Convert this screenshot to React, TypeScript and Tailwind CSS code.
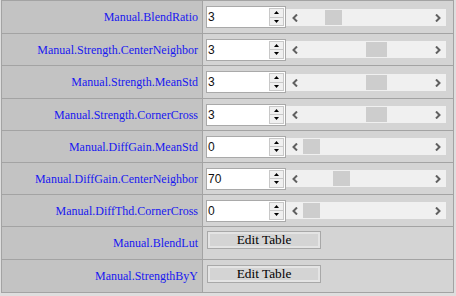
import React from "react";

type Row = {
  label: string;
  h: string;
  kind: "num" | "btn";
  value?: string;
  thumb?: string;
  btnPad?: string;
};

const rows: Row[] = [
  { label: "Manual.BlendRatio", h: "h-[33px]", kind: "num", value: "3", thumb: "left-[39px] w-[17px]" },
  { label: "Manual.Strength.CenterNeighbor", h: "h-[32px]", kind: "num", value: "3", thumb: "left-[80px] w-[21px]" },
  { label: "Manual.Strength.MeanStd", h: "h-[33px]", kind: "num", value: "3", thumb: "left-[80px] w-[21px]" },
  { label: "Manual.Strength.CornerCross", h: "h-[32px]", kind: "num", value: "3", thumb: "left-[80px] w-[21px]" },
  { label: "Manual.DiffGain.MeanStd", h: "h-[32px]", kind: "num", value: "0", thumb: "left-[17px] w-[17px]" },
  { label: "Manual.DiffGain.CenterNeighbor", h: "h-[32px]", kind: "num", value: "70", thumb: "left-[47px] w-[17px]" },
  { label: "Manual.DiffThd.CornerCross", h: "h-[32px]", kind: "num", value: "0", thumb: "left-[17px] w-[17px]" },
  { label: "Manual.BlendLut", h: "h-[33px]", kind: "btn", btnPad: "pt-[4px]" },
  { label: "Manual.StrengthByY", h: "h-[33px]", kind: "btn", btnPad: "pt-[5px]" },
];

function Spinner() {
  return (
    <div className="absolute right-[1px] top-[1px] bottom-[1px] w-[15px] flex flex-col border border-[#c8c8c8] bg-[#f0f0f0]">
      <div className="flex-1 flex items-center justify-center border-b border-[#c8c8c8]">
        <svg width="5" height="3" viewBox="0 0 5 3">
          <path d="M2.5 0 L5 3 L0 3 Z" fill="#000" />
        </svg>
      </div>
      <div className="flex-1 flex items-center justify-center">
        <svg width="5" height="3" viewBox="0 0 5 3">
          <path d="M0 0 L5 0 L2.5 3 Z" fill="#000" />
        </svg>
      </div>
    </div>
  );
}

function ScrollBar({ thumb }: { thumb: string }) {
  return (
    <div className="relative w-[160px] h-[17px] bg-[#f0f0f0]">
      <svg className="absolute left-[6px] top-[5px]" width="6" height="8" viewBox="0 0 6 8">
        <path d="M5 0.5 L1.5 4 L5 7.5" fill="none" stroke="#606060" strokeWidth="2" />
      </svg>
      <div className={`absolute top-[1px] h-[15px] bg-[#cdcdcd] ${thumb}`} />
      <svg className="absolute left-[149px] top-[5px]" width="6" height="8" viewBox="0 0 6 8">
        <path d="M1 0.5 L4.5 4 L1 7.5" fill="none" stroke="#606060" strokeWidth="2" />
      </svg>
    </div>
  );
}

export default function App() {
  return (
    <div className="w-[456px] h-[296px] bg-[#dedede] overflow-hidden">
      <div className="ml-[1px] w-[453px] border-l border-r border-t border-[#a3a3a3]">
        {rows.map((r) => (
          <div key={r.label} className={`flex border-b border-[#a3a3a3] ${r.h}`}>
            <div className="w-[201px] shrink-0 border-r border-[#a3a3a3] bg-[#c3c3c3] flex items-center justify-end pr-[4px] font-['Liberation_Serif','Times_New_Roman',serif] text-[12px] text-[#1818f0]">
              {r.label}
            </div>
            {r.kind === "num" ? (
              <div className="flex-1 bg-[#d4d4d4] flex items-center pl-[3px]">
                <div className="relative w-[80px] h-[22px] bg-white border border-[#a9a9a9]">
                  <span className="absolute left-[1px] top-[3px] font-['Liberation_Sans',Arial,sans-serif] text-[12px] leading-[14px] text-[#101010]">
                    {r.value}
                  </span>
                  <Spinner />
                </div>
                <ScrollBar thumb={r.thumb ?? ""} />
              </div>
            ) : (
              <div className={`flex-1 bg-[#d4d4d4] flex items-start pl-[4px] ${r.btnPad}`}>
                <div className="w-[114px] h-[18px] border border-[#a8a8a8] bg-[#d4d4d4] shadow-[inset_0_0_0_2px_#e4e4e4] flex items-center justify-center font-['Liberation_Serif','Times_New_Roman',serif] text-[13.33px] leading-[16px] font-normal text-black">
                  Edit Table
                </div>
              </div>
            )}
          </div>
        ))}
      </div>
    </div>
  );
}
